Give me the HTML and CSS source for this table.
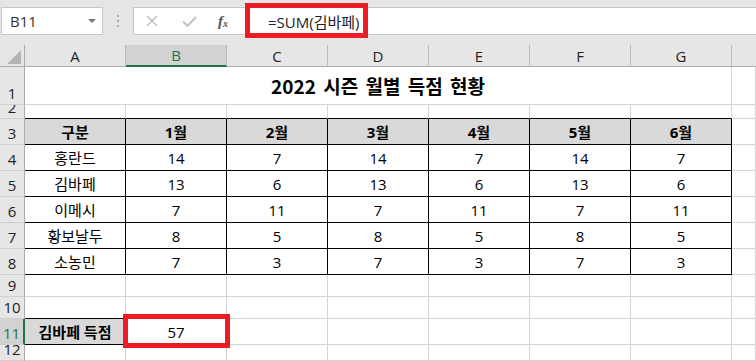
FILE: index.html
```html
<!DOCTYPE html>
<html lang="ko">
<head>
<meta charset="utf-8">
<link rel="stylesheet" href="styles.css">
</head>
<body>
<div class="app">
  <div class="toolbar">
    <div class="namebox"><span class="ref">B11</span><span class="drop"></span></div>
    <div class="grip"><i></i><i></i><i></i></div>
    <div class="fbox">
      <div class="btns">
        <svg class="ico-x" width="12" height="12" viewBox="0 0 12 12"><path d="M1 1L11 11M11 1L1 11" stroke="#bdbdbd" stroke-width="1.4" fill="none"/></svg>
        <svg class="ico-ok" width="15" height="11" viewBox="0 0 15 11"><path d="M1 5.5L5.5 10L14 1" stroke="#c2c2c2" stroke-width="2" fill="none"/></svg>
        <span class="fx">f<sub>x</sub></span>
      </div>
      <div class="formula">=SUM(김바페)</div>
    </div>
  </div>

  <div class="sheet">
    <div class="corner"><span class="tri"></span></div>
    <div class="ch">A</div><div class="ch sel">B</div><div class="ch">C</div><div class="ch">D</div><div class="ch">E</div><div class="ch">F</div><div class="ch">G</div><div class="ch end"></div>

    <div class="rh">1</div>
    <div class="c title">2022 시즌 월별 득점 현황</div>
    <div class="c"></div>

    <div class="rh">2</div>
    <div class="c tb"></div><div class="c tb"></div><div class="c tb"></div><div class="c tb"></div><div class="c tb"></div><div class="c tb"></div><div class="c tb"></div><div class="c"></div>

    <div class="rh">3</div>
    <div class="c t hd">구분</div><div class="c t hd">1월</div><div class="c t hd">2월</div><div class="c t hd">3월</div><div class="c t hd">4월</div><div class="c t hd">5월</div><div class="c t hd">6월</div><div class="c"></div>

    <div class="rh">4</div>
    <div class="c t">홍란드</div><div class="c t">14</div><div class="c t">7</div><div class="c t">14</div><div class="c t">7</div><div class="c t">14</div><div class="c t">7</div><div class="c"></div>

    <div class="rh">5</div>
    <div class="c t">김바페</div><div class="c t">13</div><div class="c t">6</div><div class="c t">13</div><div class="c t">6</div><div class="c t">13</div><div class="c t">6</div><div class="c"></div>

    <div class="rh">6</div>
    <div class="c t">이메시</div><div class="c t">7</div><div class="c t">11</div><div class="c t">7</div><div class="c t">11</div><div class="c t">7</div><div class="c t">11</div><div class="c"></div>

    <div class="rh">7</div>
    <div class="c t">황보날두</div><div class="c t">8</div><div class="c t">5</div><div class="c t">8</div><div class="c t">5</div><div class="c t">8</div><div class="c t">5</div><div class="c"></div>

    <div class="rh">8</div>
    <div class="c t">소농민</div><div class="c t">7</div><div class="c t">3</div><div class="c t">7</div><div class="c t">3</div><div class="c t">7</div><div class="c t">3</div><div class="c"></div>

    <div class="rh">9</div>
    <div class="c"></div><div class="c"></div><div class="c"></div><div class="c"></div><div class="c"></div><div class="c"></div><div class="c"></div><div class="c"></div>

    <div class="rh">10</div>
    <div class="c tb"></div><div class="c"></div><div class="c"></div><div class="c"></div><div class="c"></div><div class="c"></div><div class="c"></div><div class="c"></div>

    <div class="rh rsel">11</div>
    <div class="c t hd">김바페 득점</div>
    <div class="c active">57<span class="mark mark-cell"></span><span class="handle"></span></div>
    <div class="c"></div><div class="c"></div><div class="c"></div><div class="c"></div><div class="c"></div><div class="c"></div>

    <div class="rh">12</div>
    <div class="c"></div><div class="c"></div><div class="c"></div><div class="c"></div><div class="c"></div><div class="c"></div><div class="c"></div><div class="c"></div>
  </div>

  <span class="mark mark-formula"></span>
</div>
</body>
</html>
```

FILE: styles.css
```css
* { box-sizing: border-box; }
html, body { margin: 0; padding: 0; }
body {
  width: 756px;
  height: 361px;
  overflow: hidden;
  background: #e6e6e6;
  font-family: "Open Sans", "Noto Sans CJK KR", sans-serif;
  color: #000;
}
.app { position: relative; width: 756px; height: 361px; overflow: hidden; }

/* ---------- formula bar ---------- */
.toolbar {
  height: 45px;
  display: flex;
  align-items: flex-start;
  padding-top: 7px;
  padding-left: 1px;
}
.namebox {
  width: 102px;
  height: 28px;
  background: #fff;
  border: 1px solid #c6c6c6;
  display: flex;
  align-items: center;
  justify-content: space-between;
  padding: 0 6px 0 8px;
  font-size: 15px;
  color: #333;
}
.drop {
  width: 0; height: 0;
  border-left: 4px solid transparent;
  border-right: 4px solid transparent;
  border-top: 4px solid #777;
}
.grip {
  width: 30px;
  height: 28px;
  display: flex;
  flex-direction: column;
  align-items: center;
  justify-content: center;
  gap: 3px;
}
.grip i { width: 2px; height: 2px; background: #aaa; display: block; }
.fbox {
  flex: 1;
  height: 28px;
  background: #fff;
  border: 1px solid #c6c6c6;
  border-right: none;
  display: flex;
  align-items: center;
}
.btns {
  width: 111px;
  display: flex;
  align-items: center;
  padding-left: 12px;
}
.ico-x { margin-right: 24px; }
.ico-ok { margin-right: 21px; }
.fx {
  font-family: "Liberation Serif", serif;
  font-style: italic;
  font-weight: bold;
  font-size: 15px;
  color: #555;
  line-height: 1;
}
.fx sub { font-size: 10px; vertical-align: -1px; }
.formula {
  padding-left: 23px;
  font-size: 15px;
  color: #222;
  white-space: nowrap;
}

/* ---------- sheet ---------- */
.sheet {
  display: grid;
  grid-template-columns: 25px repeat(7, 101px) 1fr;
  grid-template-rows: 22px 38px 14px repeat(6, 26px) 22px 22px 26px 1fr;
  height: 316px;
  background: #fff;
}
.corner {
  background: #e6e6e6;
  border-right: 1px solid #ababab;
  border-bottom: 1px solid #ababab;
  position: relative;
}
.tri {
  position: absolute;
  right: 3px;
  bottom: 2px;
  width: 0; height: 0;
  border-left: 14px solid transparent;
  border-bottom: 14px solid #b4b4b4;
}
.ch {
  background: #e6e6e6;
  border-right: 1px solid #bcbcbc;
  border-bottom: 1px solid #ababab;
  display: flex;
  align-items: center;
  justify-content: center;
  font-size: 15px;
  color: #222;
  line-height: 20px;
}
.ch.sel {
  background: #d2d2d2;
  border-bottom: 2px solid #217346;
  color: #217346;
}
.ch.end { border-right: none; }
.rh {
  background: #e6e6e6;
  border-right: 1px solid #ababab;
  border-bottom: 1px solid #cfcfcf;
  display: flex;
  align-items: flex-end;
  justify-content: center;
  font-size: 15px;
  line-height: 18px;
  color: #222;
  overflow: hidden;
  padding-bottom: 2px;
}
.rh.rsel {
  background: #d2d2d2;
  color: #217346;
  border-right: 2px solid #217346;
}
.c {
  border-right: 1px solid #d4d4d4;
  border-bottom: 1px solid #d4d4d4;
  display: flex;
  align-items: center;
  justify-content: center;
  font-size: 15px;
  line-height: 18px;
  white-space: nowrap;
}
.c.title {
  grid-column: span 7;
  font-family: "Noto Sans CJK KR", sans-serif;
  font-weight: bold;
  font-size: 19px;
  word-spacing: 2px;
}
.c.tb { border-bottom-color: #000; }
.c.t { border-right-color: #000; border-bottom-color: #000; }
.c.hd { background: #d9d9d9; font-weight: bold; }
.c.active { position: relative; overflow: visible; }
.handle {
  position: absolute;
  right: -4px;
  bottom: -4px;
  width: 5px;
  height: 5px;
  background: #217346;
  border: 1px solid #fff;
}

/* ---------- red annotation boxes ---------- */
.mark {
  position: absolute;
  border: 5px solid #ed1c24;
  pointer-events: none;
}
.mark-formula { left: 245px; top: 3px; width: 123px; height: 35px; }
.mark-cell { left: -3px; top: -5px; width: 107px; height: 34px; z-index: 2; }
```
